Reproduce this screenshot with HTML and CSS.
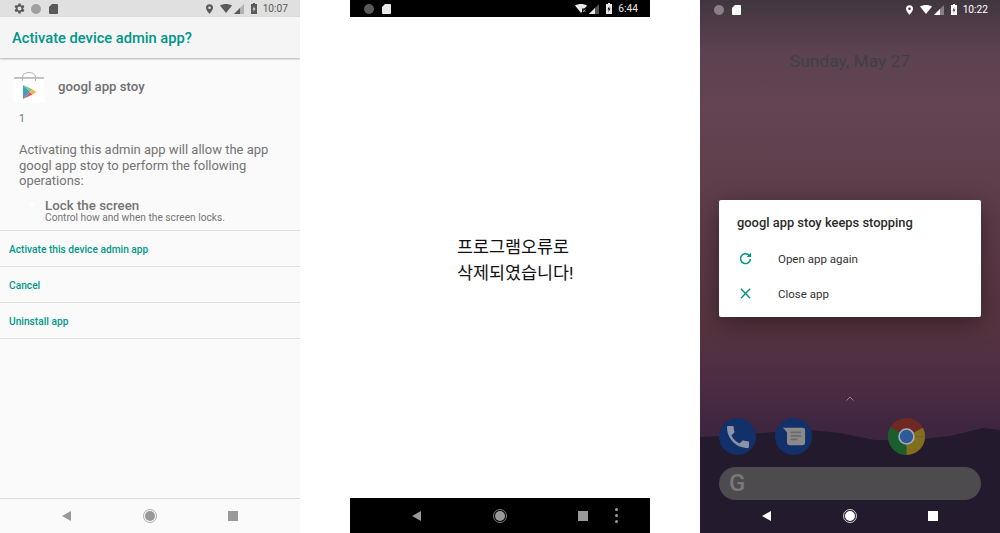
FILE: index.html
```html
<!DOCTYPE html>
<html lang="en">
<head>
    <meta charset="UTF-8">
    <title>Android screens</title>
    <link rel="stylesheet" href="styles.css">
</head>
<body>
    <svg class="defs" width="0" height="0">
        <symbol id="i-gear" viewBox="3.500 2.500 19 19"><path d="M19.400 13a7.500 7.500 0 0 0 0-2l2.100-1.600-2-3.500-2.500 1a7.500 7.500 0 0 0-1.700-1L15 3.200h-4l-.4 2.700a7.500 7.500 0 0 0-1.700 1l-2.500-1-2 3.500L6.600 11a7.500 7.500 0 0 0 0 2l-2.200 1.600 2 3.500 2.500-1a7.500 7.500 0 0 0 1.700 1l.4 2.700h4l.4-2.700a7.500 7.500 0 0 0 1.700-1l2.500 1 2-3.500zM13 15.500a3.500 3.500 0 1 1 0-7 3.500 3.500 0 0 1 0 7z" fill-rule="evenodd"/></symbol>
        <symbol id="i-card" viewBox="0 0 9 10"><path d="M3 0h5a1 1 0 0 1 1 1v8a1 1 0 0 1-1 1H1a1 1 0 0 1-1-1V3z"/></symbol>
        <symbol id="i-pin" viewBox="0 0 8 11"><path d="M4 0a4 4 0 0 0-4 4c0 2.800 4 7 4 7s4-4.200 4-7a4 4 0 0 0-4-4zm0 5.500a1.500 1.500 0 1 1 0-3 1.500 1.500 0 0 1 0 3z" fill-rule="evenodd"/></symbol>
        <symbol id="i-wifi" viewBox="0 0 12 9"><path d="M0 1.500C3.500-.5 8.500-.5 12 1.500L6 9z"/></symbol>
        <symbol id="i-wifi-x" viewBox="0 0 12 9"><path d="M0 1.500C3.500-.5 8.500-.5 12 1.500L6 9z"/><path d="M7 4.500h5V9H7z" fill="#000"/><path d="M8 5.500l2.500 2.500M10.500 5.500L8 8" stroke="#ccc" stroke-width=".7"/></symbol>
        <symbol id="i-signal" viewBox="0 0 10 10"><path d="M0 10L10 0v10z" opacity=".35"/><path d="M0 10l6-6v6z"/></symbol>
        <symbol id="i-batt" viewBox="0 0 6 11"><path d="M2 0h2v1h2v10H0V1h2zM3.300 3L1.500 6.500h1.200L2.500 9l2-3.500H3.200z" fill-rule="evenodd"/></symbol>
        <symbol id="i-back" viewBox="0 0 9 10"><path d="M9 0v10L0 5z"/></symbol>
        <symbol id="i-home" viewBox="0 0 14 14"><circle cx="7" cy="7" r="6.500" fill="none" stroke="currentColor" stroke-width=".8"/><circle cx="7" cy="7" r="5"/></symbol>
    </svg>

    <div class="screens">
        <section class="phone phone-admin">
            <div class="status status-light">
                <div class="status-left">
                    <svg class="ic-gear"><use href="#i-gear"/></svg>
                    <span class="dot"></span>
                    <svg class="ic-card"><use href="#i-card"/></svg>
                </div>
                <div class="status-right">
                    <svg class="ic-pin"><use href="#i-pin"/></svg>
                    <svg class="ic-wifi"><use href="#i-wifi"/></svg>
                    <svg class="ic-signal"><use href="#i-signal"/></svg>
                    <svg class="ic-batt"><use href="#i-batt"/></svg>
                    <span class="clock">10:07</span>
                </div>
            </div>
            <header class="admin-head">Activate device admin app?</header>
            <main class="admin-body">
                <div class="app-row">
                    <svg class="store-icon" viewBox="0 0 32 31">
                        <path d="M1 6h30l1 23.500a1.500 1.500 0 0 1-1.500 1.500h-29A1.500 1.500 0 0 1 0 29.500z" fill="#fff"/>
                        <path d="M1 6h30" stroke="#9a9a9a" stroke-width="1.200"/>
                        <path d="M9.500 9V5c0-6 13-6 13 0v4" fill="none" stroke="#b5b5b5"/>
                        <path d="M10 13v14l7-7z" fill="#3e9fc4"/>
                        <path d="M10 13l7 7 2.500-2.500z" fill="#7cc576"/>
                        <path d="M10 27l7-7 2.500 2.500z" fill="#ea4f5c"/>
                        <path d="M19.500 17.500L17 20l2.500 2.500L23.500 20z" fill="#f9b24a"/>
                    </svg>
                    <span class="app-name">googl app stoy</span>
                </div>
                <p class="version">1</p>
                <p class="admin-text">Activating this admin app will allow the app googl app stoy to perform the following operations:</p>
                <div class="policy">
                    <span class="policy-dot"></span>
                    <div>
                        <div class="policy-title">Lock the screen</div>
                        <div class="policy-sub">Control how and when the screen locks.</div>
                    </div>
                </div>
                <ul class="actions">
                    <li>Activate this device admin app</li>
                    <li>Cancel</li>
                    <li>Uninstall app</li>
                </ul>
            </main>
            <nav class="navbar navbar-light">
                <svg class="ic-back"><use href="#i-back"/></svg>
                <svg class="ic-home"><use href="#i-home"/></svg>
                <span class="ic-square"></span>
            </nav>
        </section>

        <section class="phone phone-error">
            <div class="status status-black">
                <div class="status-left">
                    <span class="dot"></span>
                    <svg class="ic-card"><use href="#i-card"/></svg>
                </div>
                <div class="status-right">
                    <svg class="ic-wifi"><use href="#i-wifi-x"/></svg>
                    <svg class="ic-signal"><use href="#i-signal"/></svg>
                    <svg class="ic-batt"><use href="#i-batt"/></svg>
                    <span class="clock">6:44</span>
                </div>
            </div>
            <main class="error-body">
                <p class="error-text">프로그램오류로<br>삭제되였습니다!</p>
            </main>
            <nav class="navbar navbar-black">
                <svg class="ic-back"><use href="#i-back"/></svg>
                <svg class="ic-home"><use href="#i-home"/></svg>
                <span class="ic-square"></span>
                <span class="ic-more"><i></i><i></i><i></i></span>
            </nav>
        </section>

        <section class="phone phone-home">
            <svg class="hills" viewBox="0 0 300 123" preserveAspectRatio="none">
                <path d="M0 27L40 25 75 22 110 20 140 23 175 30 215 30 250 26 283 18 300 20V123H0z" fill="#241a2d"/>
            </svg>
            <div class="status status-clear">
                <div class="status-left">
                    <span class="dot"></span>
                    <svg class="ic-card"><use href="#i-card"/></svg>
                </div>
                <div class="status-right">
                    <svg class="ic-pin"><use href="#i-pin"/></svg>
                    <svg class="ic-wifi"><use href="#i-wifi"/></svg>
                    <svg class="ic-signal"><use href="#i-signal"/></svg>
                    <svg class="ic-batt"><use href="#i-batt"/></svg>
                    <span class="clock">10:22</span>
                </div>
            </div>
            <div class="home-date">Sunday, May 27</div>
            <div class="crash-dialog">
                <div class="crash-title">googl app stoy keeps stopping</div>
                <div class="crash-row">
                    <svg class="crash-icon" viewBox="0 0 14 14"><path d="M11.300 4A5.300 5.300 0 1 0 12.300 7.500" fill="none" stroke="#009688" stroke-width="1.600"/><path d="M13 .8V5.500H8.300z" fill="#009688"/></svg>
                    <span>Open app again</span>
                </div>
                <div class="crash-row">
                    <svg class="crash-icon" viewBox="0 0 14 14"><path d="M2 2l10 10M12 2L2 12" fill="none" stroke="#009688" stroke-width="1.500"/></svg>
                    <span>Close app</span>
                </div>
            </div>
            <svg class="chevron" viewBox="0 0 8 5"><path d="M.5 4.500L4 1l3.500 3.500" fill="none" stroke="#8f8590"/></svg>
            <div class="dock">
                <span class="dock-app app-phone">
                    <svg viewBox="3 3 18 18"><path d="M6.620 10.790c1.440 2.830 3.760 5.140 6.590 6.590l2.200-2.200c.27-.27.67-.36 1.020-.24 1.120.37 2.330.57 3.570.57.55 0 1 .45 1 1V20c0 .55-.45 1-1 1-9.390 0-17-7.610-17-17 0-.55.45-1 1-1h3.500c.55 0 1 .45 1 1 0 1.250.2 2.450.57 3.570.11.35.03.74-.25 1.020l-2.200 2.200z" fill="#8a93a8"/></svg>
                </span>
                <span class="dock-app app-msg">
                    <svg viewBox="0 0 24 24"><path d="M2.500 4h17A2 2 0 0 1 21.500 6v11a2 2 0 0 1-2 2H8a2 2 0 0 1-2-2V8z" fill="#8a8a8a"/><path d="M9 8h9M9 11h9M9 14h6" stroke="#6b6b6b" stroke-width="1.500"/></svg>
                </span>
                <span class="dock-app app-chrome">
                    <svg viewBox="0 0 36 36">
                        <circle cx="18" cy="18" r="18" fill="#6e2a22"/>
                        <path d="M18 18L2.400 9A18 18 0 0 0 18 36z" fill="#1b5e2e"/>
                        <path d="M18 18h18A18 18 0 0 1 18 36z" fill="#80701e"/>
                        <path d="M18 18L34 9.500A18 18 0 0 1 36 18l-12 0z" fill="#80701e"/>
                        <circle cx="18" cy="18" r="8" fill="#a9aeb8"/>
                        <circle cx="18" cy="18" r="6.500" fill="#2f5a9a"/>
                    </svg>
                </span>
            </div>
            <div class="search-bar"><span class="search-g">G</span></div>
            <nav class="navbar navbar-clear">
                <svg class="ic-back"><use href="#i-back"/></svg>
                <svg class="ic-home"><use href="#i-home"/></svg>
                <span class="ic-square"></span>
            </nav>
        </section>
    </div>
</body>
</html>
```

FILE: styles.css
```css
* {
    margin: 0;
    padding: 0;
    box-sizing: border-box;
}
body {
    width: 1000px;
    height: 533px;
    overflow: hidden;
    background: #fff;
    font-family: Roboto, "Noto Sans CJK KR", sans-serif;
}
.defs {
    position: absolute;
}
.screens {
    display: flex;
    gap: 50px;
}
.phone {
    width: 300px;
    height: 533px;
    display: flex;
    flex-direction: column;
    position: relative;
    overflow: hidden;
}
svg {
    fill: currentColor;
    display: block;
}

/* status bar */
.status {
    height: 17px;
    flex: none;
    display: flex;
    justify-content: space-between;
    align-items: center;
    padding: 0 12px 0 14px;
    position: relative;
}
.status-light {
    background: #e0e0e0;
    color: #5a5a5a;
}
.status-black {
    background: #000;
    color: #e8e8e8;
}
.status-clear {
    color: #fff;
    padding-top: 2px;
}
.status-left,
.status-right {
    display: flex;
    align-items: center;
}
.ic-gear {
    width: 11px;
    height: 11px;
    margin-right: 6px;
}
.dot {
    width: 10px;
    height: 10px;
    border-radius: 50%;
    background: #a0a0a0;
    margin-right: 8px;
}
.status-black .dot {
    background: #5a5a5a;
}
.status-clear .dot {
    background: #8b7f89;
}
.ic-card {
    width: 9px;
    height: 10px;
}
.ic-pin {
    width: 7px;
    height: 10px;
    margin-right: 7px;
}
.ic-wifi {
    width: 12px;
    height: 9px;
}
.ic-signal {
    width: 10px;
    height: 10px;
    margin-left: 2px;
    margin-right: 7px;
}
.ic-batt {
    width: 6px;
    height: 11px;
    margin-right: 6px;
}
.clock {
    font-size: 10.200px;
    line-height: 17px;
}

/* nav bar */
.navbar {
    height: 35px;
    flex: none;
    display: flex;
    align-items: center;
    position: relative;
    padding-left: 62px;
}
.navbar-light {
    background: #fafafa;
    border-top: 1px solid #dcdcdc;
    color: #999;
}
.navbar-black {
    background: #000;
    color: #999;
}
.navbar-clear {
    color: #fff;
}
.ic-back {
    width: 9px;
    height: 10px;
}
.ic-home {
    width: 14px;
    height: 14px;
    margin-left: 72px;
}
.ic-square {
    width: 10px;
    height: 10px;
    background: currentColor;
    margin-left: 71px;
}
.ic-more {
    display: flex;
    flex-direction: column;
    gap: 3px;
    margin-left: 27px;
}
.ic-more i {
    width: 3px;
    height: 3px;
    border-radius: 50%;
    background: #999;
}

/* device admin screen */
.phone-admin {
    background: #fafafa;
}
.admin-head {
    height: 41px;
    flex: none;
    background: #f5f5f5;
    color: #009688;
    font-size: 14.700px;
    font-weight: 500;
    line-height: 43px;
    padding-left: 12px;
    box-shadow: 0 1px 2px rgba(0, 0, 0, .3);
    position: relative;
}
.admin-body {
    flex: 1;
    color: #757575;
}
.app-row {
    display: flex;
    align-items: center;
    padding: 14px 0 0 13px;
}
.store-icon {
    width: 32px;
    height: 31px;
    flex: none;
}
.app-name {
    font-size: 13.200px;
    font-weight: 500;
    margin-left: 13px;
    margin-top: -2px;
    color: #6f6f6f;
}
.version {
    font-size: 10.500px;
    line-height: 12px;
    padding: 10px 0 0 19px;
}
.admin-text {
    font-size: 13px;
    line-height: 15.500px;
    padding: 17px 20px 0 19px;
}
.policy {
    display: flex;
    padding: 10px 0 0 30px;
}
.policy-dot {
    width: 4px;
    height: 4px;
    border-radius: 50%;
    background: #fff;
    margin: 4px 11px 0 0;
}
.policy-title {
    font-size: 13.300px;
    font-weight: 500;
    line-height: 13px;
}
.policy-sub {
    font-size: 10.200px;
    line-height: 12px;
}
.actions {
    list-style: none;
    margin-top: 6px;
    border-top: 1px solid #dfdfdf;
}
.actions li {
    height: 36px;
    border-bottom: 1px solid #dfdfdf;
    color: #009688;
    font-size: 10.200px;
    font-weight: 500;
    line-height: 37px;
    padding-left: 9px;
}

/* error screen */
.phone-error {
    background: #fff;
}
.error-body {
    flex: 1;
    padding: 217px 0 0 107px;
}
.error-text {
    font-size: 17.400px;
    line-height: 26px;
    color: #111;
}

/* home screen */
.phone-home {
    background: linear-gradient(#40363f 0, #5c4250 50px, #644452 110px, #55333f 330px, #4a2c42 390px, #3e2540 430px);
}
.hills {
    position: absolute;
    left: 0;
    right: 0;
    bottom: 0;
    width: 300px;
    height: 123px;
}
.home-date {
    text-align: center;
    color: #413f45;
    font-size: 17.400px;
    line-height: 20px;
    padding-top: 34px;
    position: relative;
}
.crash-dialog {
    position: absolute;
    left: 19px;
    top: 200px;
    width: 262px;
    height: 117px;
    background: #fff;
    border-radius: 2px;
    box-shadow: 0 6px 24px rgba(0, 0, 0, .4);
    color: #333;
}
.crash-title {
    font-size: 12.900px;
    font-weight: 500;
    color: #2b2b2b;
    padding: 15px 0 0 18px;
    line-height: 16px;
    margin-bottom: 10px;
}
.crash-row {
    display: flex;
    align-items: center;
    height: 35px;
    padding-left: 20px;
    font-size: 11.500px;
}
.crash-icon {
    width: 13px;
    height: 13px;
    margin-right: 26px;
}
.chevron {
    position: absolute;
    left: 146px;
    top: 396px;
    width: 8px;
    height: 5px;
}
.dock {
    position: absolute;
    left: 19px;
    top: 418px;
    display: flex;
}
.dock-app {
    width: 37px;
    height: 37px;
    border-radius: 50%;
    display: flex;
    align-items: center;
    justify-content: center;
}
.app-phone {
    background: #12306a;
    margin-right: 19px;
}
.app-phone svg {
    width: 22px;
    height: 22px;
}
.app-msg {
    background: #12306a;
    margin-right: 76px;
}
.app-msg svg {
    width: 28px;
    height: 28px;
}
.app-chrome svg {
    width: 37px;
    height: 37px;
}
.search-bar {
    position: absolute;
    left: 19px;
    top: 467px;
    width: 262px;
    height: 33px;
    border-radius: 17px;
    background: #4e4b4f;
    display: flex;
    align-items: center;
    padding-left: 10px;
}
.search-g {
    color: #7a787b;
    font-size: 24px;
    font-weight: 500;
    line-height: 33px;
}
.navbar-clear {
    position: absolute;
    left: 0;
    right: 0;
    bottom: 0;
}
```
